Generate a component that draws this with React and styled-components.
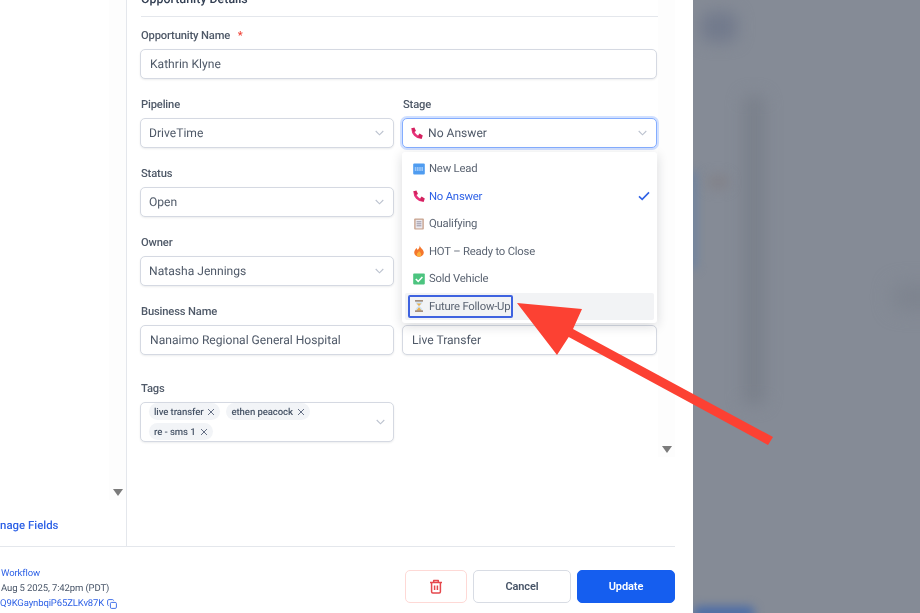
import React from "react";
import styled, { createGlobalStyle } from "styled-components";

const Global = createGlobalStyle`
  html, body { margin: 0; padding: 0; width: 920px; height: 613px; overflow: hidden; background: #858b96; }
  * { box-sizing: border-box; }
  body { font-family: Roboto, "Liberation Sans", sans-serif; text-rendering: geometricPrecision; }
`;

const Page = styled.div`
  position: relative;
  width: 920px;
  height: 613px;
  display: flex;
  overflow: hidden;
`;
const Drawer = styled.div`
  width: 693px;
  height: 613px;
  background: #fff;
  padding-right: 18px;
  display: flex;
  flex-direction: column;
  overflow: hidden;
  filter: blur(0.35px);
`;
const Body = styled.div`
  height: 546px;
  display: flex;
  flex-shrink: 0;
`;
const LeftPanel = styled.aside`
  width: 127px;
  flex-shrink: 0;
  border-right: 1px solid #e4e7ec;
  display: flex;
  flex-direction: column;
  align-items: flex-end;
`;
const Track = styled.div`
  width: 17px;
  height: ${(p) => p.$h}px;
  flex-shrink: 0;
  background: #fdfdfd;
  display: flex;
  flex-direction: column;
  justify-content: flex-end;
  align-items: center;
  padding-bottom: 4px;
`;
const TrackArrow = styled.div`
  width: 0;
  height: 0;
  border-left: 5px solid transparent;
  border-right: 5px solid transparent;
  border-top: 7px solid #7b7b7b;
`;
const ManageFields = styled.a`
  align-self: flex-start;
  margin: 18px 0 0 -16px;
  font-size: 11.4px;
  line-height: 14px;
  font-weight: 500;
  color: #2f62e6;
  white-space: nowrap;
`;
const Main = styled.main`
  flex: 1;
  min-width: 0;
  padding-left: 13px;
`;
const Heading = styled.h2`
  margin: -8px 0 11px 1px;
  height: 25px;
  border-bottom: 1px solid #e4e7ec;
  font-size: 12.4px;
  line-height: 15px;
  font-weight: 500;
  color: #344054;
`;
const Grid = styled.div`
  display: grid;
  grid-template-columns: 254px 255px;
  column-gap: 8px;
  row-gap: 18px;
`;
const Field = styled.div`
  position: relative;
  grid-column: ${(p) => (p.$wide ? "1 / -1" : "auto")};
  margin-top: ${(p) => (p.$tags ? 8 : 0)}px;
`;
const Label = styled.label`
  display: block;
  height: 14px;
  margin: 0 0 7px 1px;
  padding-top: 1px;
  font-size: 11.2px;
  letter-spacing: -0.15px;
  line-height: 14px;
  font-weight: 500;
  color: #4f5968;
  span { color: #f04438; margin-left: 5px; }
`;
const Control = styled.div`
  height: 30px;
  display: flex;
  align-items: center;
  padding: 0 ${(p) => (p.$select ? 8 : 9)}px;
  border-radius: 5px;
  background: #fff;
  border: 1px solid ${(p) => (p.$focus ? "#84adff" : "#d5d9e2")};
  box-shadow: ${(p) => (p.$focus ? "0 0 0 2px #d1e0ff" : "0 1px 2px rgba(16,24,40,.08)")};
  font-size: 12.1px;
  color: #4f5968;
  gap: 5px;
`;
const Value = styled.span`
  flex: 1;
  white-space: nowrap;
`;
const Chevron = styled.svg`
  width: 9px;
  height: 6px;
  margin-right: ${(p) => (p.$tags ? 0 : 1)}px;
  flex-shrink: 0;
  fill: none;
  stroke: #bcc3cf;
  stroke-width: 1.1;
`;
const Menu = styled.div`
  position: absolute;
  left: 0;
  top: 55px;
  width: 255px;
  height: 171px;
  background: #fff;
  padding: 3px 3px;
  border-radius: 3px;
  box-shadow: 0 3px 12px rgba(16,24,40,.16);
  z-index: 2;
  display: flex;
  flex-direction: column;
`;
const Option = styled.div`
  height: 27.5px;
  flex-shrink: 0;
  display: flex;
  align-items: center;
  padding-left: 3px;
  border-radius: 2px;
  background: ${(p) => (p.$hover ? "#f2f3f5" : "transparent")};
  color: ${(p) => (p.$active ? "#2f62e6" : "#5b6472")};
  font-size: 11.3px;
  letter-spacing: -0.2px;
`;
const OptionInner = styled.div`
  display: flex;
  align-items: center;
  gap: 4px;
  height: 23px;
  padding-left: 3px;
  flex: ${(p) => (p.$focus ? "0 0 105px" : 1)};
  border: 2px solid ${(p) => (p.$focus ? "#3f63e0" : "transparent")};
  border-radius: 2px;
  white-space: nowrap;
`;
const Check = styled.svg`
  margin-left: auto;
  margin-right: 2px;
  width: 12px;
  height: 10px;
  fill: none;
  stroke: #2f62e6;
  stroke-width: 1.6;
  flex-shrink: 0;
`;
const Tags = styled.div`
  height: 40px;
  display: flex;
  padding: 0 8px 0 8px;
  border-radius: 5px;
  background: #fff;
  border: 1px solid #d5d9e2;
  box-shadow: 0 1px 2px rgba(16,24,40,.08);
  align-items: center;
`;
const TagWrap = styled.div`
  flex: 1;
  display: flex;
  flex-wrap: wrap;
  gap: 3px 6px;
  align-content: flex-start;
  align-self: flex-start;
`;
const Tag = styled.span`
  height: 17px;
  display: inline-flex;
  align-items: center;
  gap: 4px;
  padding: 1px 5px 0;
  border-radius: 9px;
  background: #f2f4f7;
  color: #475467;
  font-size: 9.6px;
  letter-spacing: -0.1px;
  font-weight: 500;
  white-space: nowrap;
`;
const Footer = styled.footer`
  flex: 1;
  border-top: 1px solid #e4e7ec;
  display: flex;
  justify-content: space-between;
  padding-top: 23px;
`;
const Meta = styled.div`
  font-size: 9.5px;
  letter-spacing: -0.12px;
  line-height: 15px;
  color: #475467;
  margin-top: -4px;
  white-space: nowrap;
`;
const MetaLine = styled.div`
  margin-left: ${(p) => p.$shift || 0}px;
  color: ${(p) => (p.$link ? "#2f62e6" : "#475467")};
  display: flex;
  align-items: center;
  gap: 3px;
`;
const Actions = styled.div`
  display: flex;
  gap: 6px;
`;
const Btn = styled.button`
  width: ${(p) => p.$w}px;
  height: 33px;
  border-radius: 5px;
  display: flex;
  align-items: center;
  justify-content: center;
  font-family: inherit;
  font-size: 11px;
  letter-spacing: -0.1px;
  font-weight: 600;
  padding: 0;
  border: 1px solid ${(p) => p.$border};
  background: ${(p) => p.$bg};
  color: ${(p) => p.$fg};
`;
const Scrim = styled.div`
  position: relative;
  flex: 1;
  background: #858b96;
  overflow: hidden;
`;
const Blob = styled.div`
  position: absolute;
  left: ${(p) => p.$x}px;
  top: ${(p) => p.$y}px;
  width: ${(p) => p.$w}px;
  height: ${(p) => p.$h}px;
  background: ${(p) => p.$c};
  filter: blur(${(p) => p.$b}px);
  border-radius: 8px;
`;
const Arrow = styled.svg`
  position: absolute;
  left: 0;
  top: 0;
  z-index: 5;
  pointer-events: none;
`;
const IconBox = styled.svg`
  width: 12px;
  height: 12px;
  flex-shrink: 0;
`;

const Phone = () => (
  <IconBox viewBox="0 0 12 12">
    <path d="M1.8 1.2 C1.2 6 5.5 11 10.8 10.4" fill="none" stroke="#e8337a" strokeWidth="2.6" />
    <path d="M.6 1.2 L3.4 .4 L5 4 L2.6 5.2Z M7.2 8.2 L8.6 6.6 L11.8 8.4 L10.8 11.6 L7.4 10.8Z" fill="#d3225f" />
  </IconBox>
);
const NewIcon = () => (
  <IconBox viewBox="0 0 12 12">
    <rect x=".2" y=".6" width="11.6" height="10.8" rx="1" fill="#4f9cf0" />
    <path d="M1.8 5h8.4M1.8 7h8.4" stroke="#e6f1ff" strokeWidth="1.1" strokeDasharray="1.6 .6" />
  </IconBox>
);
const Clip = () => (
  <IconBox viewBox="0 0 12 12">
    <rect x="1.2" y=".4" width="9.6" height="11.2" rx=".8" fill="#c9a38f" />
    <rect x="2.6" y="1.8" width="6.8" height="8.6" fill="#eceaf0" />
    <path d="M3.6 3.8h4.8M3.6 5.8h4.8M3.6 7.8h4.8" stroke="#8f8a9a" strokeWidth=".9" />
  </IconBox>
);
const Flame = () => (
  <IconBox viewBox="0 0 12 12">
    <path d="M6.6.2C7 3 10.8 4.2 10.8 7.6 10.8 10.2 8.6 11.8 6 11.8S1.2 10.2 1.2 7.6C1.2 5.6 2.6 4.4 3.4 3 4 3.6 4.4 4.2 4.6 5 5.8 3.8 6.8 2.2 6.6.2Z" fill="#f4762d" />
    <path d="M6 6C6.8 7.2 8.2 8 8.2 9.4 8.2 10.8 7.2 11.6 6 11.6S3.8 10.8 3.8 9.4C3.8 8 5.6 7.4 6 6Z" fill="#fbb03b" />
  </IconBox>
);
const Green = () => (
  <IconBox viewBox="0 0 12 12">
    <rect x=".2" y=".6" width="11.6" height="10.8" rx=".8" fill="#4cc47f" />
    <path d="M2.8 6l2.4 2.4L9.4 4" fill="none" stroke="#fff" strokeWidth="1.5" />
  </IconBox>
);
const Hourglass = () => (
  <IconBox viewBox="0 0 12 12">
    <path d="M2.6 1.2h6.8C9.4 4.4 7 5 6.6 6 7 7 9.4 7.6 9.4 10.8H2.6C2.6 7.6 5 7 5.4 6 5 5 2.6 4.4 2.6 1.2Z" fill="#cfe3f5" />
    <path d="M3.6 3.4h4.8L6 6ZM6 7.2 8.6 10.4H3.4Z" fill="#eeb04a" />
    <path d="M2 .9h8M2 11.1h8" stroke="#8c6f55" strokeWidth="1.1" />
  </IconBox>
);
const ChevronIcon = ({ tags }) => (
  <Chevron $tags={tags} viewBox="0 0 9 6"><path d="M.7 1l3.8 3.8L8.3 1" /></Chevron>
);
const X = () => (
  <svg width="8" height="8" viewBox="0 0 8 8" fill="none" stroke="#667085" strokeWidth="1"><path d="M1 1l6 6M7 1L1 7" /></svg>
);
const Trash = () => (
  <svg width="14" height="15" viewBox="0 0 14 15" fill="none" stroke="#e5484d" strokeWidth="1.5" strokeLinejoin="round">
    <path d="M1 3.5h12M4.7 3.3V1.6h4.6v1.7M2.6 3.5v9.2c0 .7.5 1.2 1.2 1.2h6.4c.7 0 1.2-.5 1.2-1.2V3.5M5.6 6.6v4.4M8.4 6.6v4.4" />
  </svg>
);
const Copy = () => (
  <svg width="10" height="10" viewBox="0 0 10 10" fill="none" stroke="#2f62e6" strokeWidth=".9">
    <rect x="3.4" y="3.4" width="6" height="6" rx="1.2" />
    <path d="M6.6 1.6A1.2 1.2 0 0 0 5.6.6H1.8A1.2 1.2 0 0 0 .6 1.8v3.8a1.2 1.2 0 0 0 1 1" />
  </svg>
);

const options = [
  { icon: <NewIcon />, label: "New Lead" },
  { icon: <Phone />, label: "No Answer", active: true },
  { icon: <Clip />, label: "Qualifying" },
  { icon: <Flame />, label: "HOT – Ready to Close" },
  { icon: <Green />, label: "Sold Vehicle" },
  { icon: <Hourglass />, label: "Future Follow-Up", hover: true },
];

const Select = ({ children, focus }) => (
  <Control $select $focus={focus}>
    {children}
    <ChevronIcon />
  </Control>
);

export default function App() {
  return (
    <Page>
      <Global />
      <Drawer>
        <Body>
          <LeftPanel>
            <Track $h={500}><TrackArrow /></Track>
            <ManageFields>Manage Fields</ManageFields>
          </LeftPanel>
          <Main>
            <Heading>Opportunity Details</Heading>
            <Grid>
              <Field $wide>
                <Label>Opportunity Name <span>*</span></Label>
                <Control><Value>Kathrin Klyne</Value></Control>
              </Field>
              <Field>
                <Label>Pipeline</Label>
                <Select><Value>DriveTime</Value></Select>
              </Field>
              <Field>
                <Label>Stage</Label>
                <Select focus><Phone /><Value>No Answer</Value></Select>
                <Menu>
                  {options.map((o) => (
                    <Option key={o.label} $active={o.active} $hover={o.hover}>
                      <OptionInner $focus={o.hover}>
                        {o.icon}
                        {o.label}
                        {o.active && (
                          <Check viewBox="0 0 12 10"><path d="M1 5.4l3.2 3L11 1.4" /></Check>
                        )}
                      </OptionInner>
                    </Option>
                  ))}
                </Menu>
              </Field>
              <Field>
                <Label>Status</Label>
                <Select><Value>Open</Value></Select>
              </Field>
              <Field />
              <Field>
                <Label>Owner</Label>
                <Select><Value>Natasha Jennings</Value></Select>
              </Field>
              <Field />
              <Field>
                <Label>Business Name</Label>
                <Control><Value>Nanaimo Regional General Hospital</Value></Control>
              </Field>
              <Field>
                <Label>&nbsp;</Label>
                <Control><Value>Live Transfer</Value></Control>
              </Field>
              <Field $tags>
                <Label>Tags</Label>
                <Tags>
                  <TagWrap>
                    <Tag>live transfer <X /></Tag>
                    <Tag>ethen peacock <X /></Tag>
                    <Tag>re - sms 1 <X /></Tag>
                  </TagWrap>
                  <ChevronIcon tags />
                </Tags>
              </Field>
            </Grid>
          </Main>
          <Track $h={457}><TrackArrow /></Track>
        </Body>
        <Footer>
          <Meta>
            <MetaLine $link $shift={1}>Workflow</MetaLine>
            <MetaLine $shift={1}>Aug 5 2025, 7:42pm (PDT)</MetaLine>
            <MetaLine $link>Q9KGaynbqiP65ZLKv87K <Copy /></MetaLine>
          </Meta>
          <Actions>
            <Btn $w={62} $border="#fed9d6" $bg="#fff" $fg="#e5484d"><Trash /></Btn>
            <Btn $w={98} $border="#d8dce4" $bg="#fff" $fg="#475467">Cancel</Btn>
            <Btn $w={98} $border="#155eef" $bg="#155eef" $fg="#fff">Update</Btn>
          </Actions>
        </Footer>
      </Drawer>
      <Scrim>
        <Blob $x={8} $y={12} $w={36} $h={30} $c="#727a8c" $b={8} />
        <Blob $x={50} $y={95} $w={22} $h={310} $c="#7a808b" $b={8} />
        <Blob $x={-6} $y={170} $w={10} $h={100} $c="#6f839f" $b={5} />
        <Blob $x={14} $y={175} $w={22} $h={14} $c="#828289" $b={6} />
        <Blob $x={200} $y={285} $w={50} $h={24} $c="#7d838e" $b={10} />
        <Blob $x={0} $y={606} $w={62} $h={14} $c="#4d6da6" $b={5} />
      </Scrim>
      <Arrow width="920" height="613" viewBox="0 0 920 613">
        <polygon points="517,303 582,309 573,329 773,437 768,445 568.7,337 557,355" fill="#fc4133" />
      </Arrow>
    </Page>
  );
}
